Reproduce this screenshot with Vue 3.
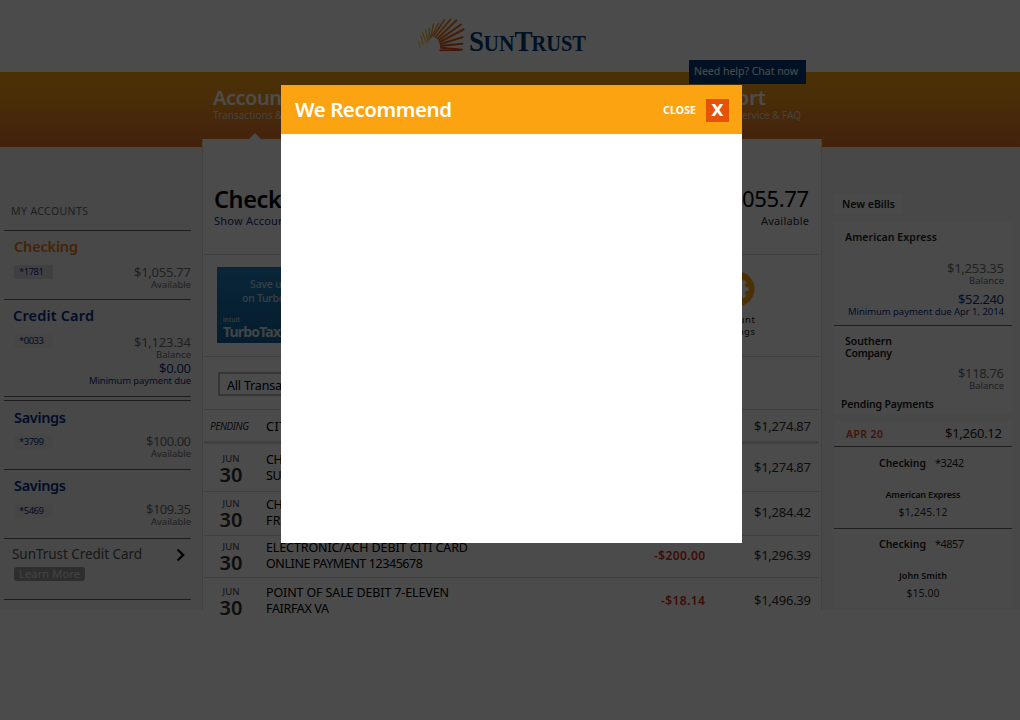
<script setup>
// v-fit="width" tracks a line of text so that it fills the given width.
const vFit = {
  mounted(el, { value }) {
    const natural = el.getBoundingClientRect().width
    const gaps = el.textContent.trim().length - 1
    if (!value || gaps < 1) return
    const spacing = (value - natural) / gaps
    el.style.letterSpacing = `${spacing}px`
    el.style.marginRight = `${-spacing}px`
  },
}

const accounts = [
  { name: 'Checking', nameW: 64, no: '*1781', amount: '$1,055.77', amountW: 57, note: 'Available', noteW: 40, kind: 'a1' },
  { name: 'Credit Card', nameW: 81, no: '*0033', amount: '$1,123.34', amountW: 57, note: 'Balance', noteW: 35, kind: 'a2', due: '$0.00' },
  { name: 'Savings', nameW: 52, no: '*3799', amount: '$100.00', amountW: 45, note: 'Available', noteW: 40, kind: 'a3' },
  { name: 'Savings', nameW: 52, no: '*5469', amount: '$109.35', amountW: 45, note: 'Available', noteW: 40, kind: 'a4' },
]

const rows = [
  { kind: 'r1', l1: 'CHECK', w1: 38, l2: 'SUNTRUST', w2: 61, bal: '$1,274.87' },
  { kind: 'r2', l1: 'CHECK', w1: 38, l2: 'FRESH', w2: 38, bal: '$1,284.42' },
  { kind: 'r3', l1: 'ELECTRONIC/ACH DEBIT CITI CARD', w1: 202, l2: 'ONLINE PAYMENT 12345678', w2: 157, neg: '-$200.00', negW: 51, bal: '$1,296.39' },
  { kind: 'r4', l1: 'POINT OF SALE DEBIT 7-ELEVEN', w1: 183, l2: 'FAIRFAX VA', w2: 63, neg: '-$18.14', negW: 44, bal: '$1,496.39' },
]

const payments = [
  { no: '*3242', who: 'American Express', whoW: 75, sum: '$1,245.12', sumW: 49 },
  { no: '*4857', who: 'John Smith', whoW: 48, sum: '$15.00', sumW: 33 },
]

const rays = [
  [440, 50.3, 460, 50.3, 1.5, '#d8471a'],
  [441, 47.8, 462, 49.6, 1.9, '#dc4f1c'],
  [441, 45.8, 462.5, 43.7, 2.1, '#e05a1e'],
  [440.5, 44, 462.5, 37.2, 2.2, '#e4661e'],
  [440, 42, 463.5, 29.5, 2.2, '#e36a22'],
  [439, 40, 461, 24.5, 2.1, '#e26a20'],
  [437.5, 38.5, 456.5, 20.2, 2, '#e87a22'],
  [435.5, 37, 450.5, 19.5, 1.8, '#e97e24'],
  [433.5, 36, 444.5, 20, 1.6, '#ea8a26'],
  [431.5, 36.5, 438.5, 23.5, 1.4, '#eb9428'],
  [430.5, 38, 433.5, 24, 1.3, '#eda028'],
  [429, 40, 429.2, 28, 1.2, '#efaa28'],
  [428, 42, 425.5, 29.5, 1.1, '#f0b428'],
  [426, 42.5, 422.5, 32.5, 1.1, '#f2c02a'],
  [423, 44.5, 421, 36, 1.1, '#f2c82a'],
  [420, 47.5, 418.6, 41, 1.1, '#f2cc2a'],
]
</script>

<template>
  <div class="page">
    <header class="brand">
      <svg class="logo" width="180" height="56" viewBox="412 7 180 56">
        <line v-for="(r, i) in rays" :key="i" :x1="r[0]" :y1="r[1]" :x2="r[2]" :y2="r[3]" :stroke-width="r[4]" :stroke="r[5]" stroke-linecap="round" />
        <g class="wordmark" fill="#003a7a">
          <text x="469" y="51" font-size="30" textLength="15" lengthAdjust="spacingAndGlyphs">S</text>
          <text x="483.5" y="51" font-size="23" textLength="31" lengthAdjust="spacingAndGlyphs">UN</text>
          <text x="514.5" y="51" font-size="30" textLength="18" lengthAdjust="spacingAndGlyphs">T</text>
          <text x="531.5" y="51" font-size="23" textLength="54.5" lengthAdjust="spacingAndGlyphs">RUST</text>
        </g>
      </svg>
    </header>

    <nav class="nav">
      <div class="tab">
        <b v-fit="86">Accounts</b>
        <small v-fit="106">Transactions &amp; Activity</small>
      </div>
      <div class="tab support">
        <b v-fit="78">Support</b>
        <small v-fit="113">Customer Service &amp; FAQ</small>
      </div>
      <i class="pointer"></i>
      <div class="chat"><span v-fit="104">Need help? Chat now</span></div>
    </nav>

    <div class="main">
      <aside class="left">
        <div class="heading"><span v-fit="77">MY ACCOUNTS</span></div>
        <section v-for="a in accounts" :key="a.no" class="account" :class="a.kind">
          <div class="name"><span v-fit="a.nameW">{{ a.name }}</span></div>
          <div class="detail">
            <div class="chip"><span v-fit="25">{{ a.no }}</span></div>
            <div class="money">
              <span v-fit="a.amountW" class="amt">{{ a.amount }}</span>
              <span v-fit="a.noteW" class="note">{{ a.note }}</span>
              <span v-if="a.due" v-fit="32" class="amt blue due">{{ a.due }}</span>
              <span v-if="a.due" v-fit="102" class="note blue">Minimum payment due</span>
            </div>
          </div>
        </section>
        <section class="offer">
          <div class="offer-text">
            <span v-fit="130" class="offer-name">SunTrust Credit Card</span>
            <div class="learn"><span v-fit="61">Learn More</span></div>
          </div>
          <svg class="chev" width="10" height="14" viewBox="0 0 10 14"><path d="M1.5 1.5 L7.2 7 L1.5 12.5" fill="none" stroke="#000" stroke-width="2.2" /></svg>
        </section>
      </aside>

      <main class="center">
        <section class="summary">
          <div class="col">
            <span v-fit="103" class="acct">Checking</span>
            <span v-fit="115" class="show">Show Account Details</span>
          </div>
          <div class="col end">
            <span v-fit="97" class="total">$1,055.77</span>
            <span v-fit="48" class="avail">Available</span>
          </div>
        </section>
        <section class="promo">
          <div class="turbo">
            <span v-fit="51" class="save">Save up to</span>
            <span v-fit="59" class="on">on TurboTax</span>
            <span v-fit="17" class="intuit">intuit</span>
            <span v-fit="58" class="tt">TurboTax</span>
          </div>
          <div class="settings">
            <svg width="36" height="36" viewBox="0 0 36 36">
              <circle cx="18" cy="18" r="17.5" fill="#f9a010" />
              <circle cx="18" cy="18" r="9" fill="#fff" />
              <circle cx="18" cy="18" r="9.5" fill="none" stroke="#fff" stroke-width="4" stroke-dasharray="4 3.46" stroke-dashoffset="2" />
            </svg>
            <span v-fit="40">Account</span>
            <span v-fit="40">Settings</span>
          </div>
        </section>
        <section class="filter">
          <div class="select"><span v-fit="89">All Transactions</span></div>
        </section>
        <section class="pending">
          <span v-fit="39" class="pend">PENDING</span>
          <span v-fit="25" class="desc">CITI</span>
          <span v-fit="57" class="bal">$1,274.87</span>
        </section>
        <section v-for="r in rows" :key="r.kind" class="tx" :class="r.kind">
          <div class="date"><span v-fit="17" class="jun">JUN</span><span v-fit="23" class="day">30</span></div>
          <div class="lines"><span v-fit="r.w1">{{ r.l1 }}</span><span v-fit="r.w2">{{ r.l2 }}</span></div>
          <div class="neg"><span v-if="r.neg" v-fit="r.negW">{{ r.neg }}</span></div>
          <div class="bal"><span v-fit="57">{{ r.bal }}</span></div>
        </section>
      </main>

      <aside class="right">
        <div class="tag"><span v-fit="53">New eBills</span></div>
        <div class="card bills">
          <section class="bill amex">
            <span v-fit="92" class="payee">American Express</span>
            <span v-fit="57" class="amt">$1,253.35</span>
            <span v-fit="35" class="note">Balance</span>
            <span v-fit="46" class="amt blue due2">$52.240</span>
            <span v-fit="156" class="note blue">Minimum payment due Apr 1, 2014</span>
          </section>
          <section class="bill southern">
            <span v-fit="47" class="payee">Southern</span>
            <span v-fit="47" class="payee">Company</span>
            <span v-fit="46" class="amt">$118.76</span>
            <span v-fit="35" class="note">Balance</span>
            <span v-fit="93" class="payee pp">Pending Payments</span>
          </section>
        </div>
        <div class="card pays">
          <div class="total-row"><b v-fit="37">APR 20</b><span v-fit="57">$1,260.12</span></div>
          <section v-for="p in payments" :key="p.no" class="pay">
            <div class="from"><b v-fit="47">Checking</b><span v-fit="29">{{ p.no }}</span></div>
            <div class="to">
              <span v-fit="p.whoW" class="who">{{ p.who }}</span>
              <span v-fit="p.sumW" class="sum">{{ p.sum }}</span>
            </div>
          </section>
        </div>
      </aside>
    </div>

    <div class="overlay"></div>
    <div class="modal">
      <div class="modal-head">
        <span v-fit="157" class="modal-title">We Recommend</span>
        <span v-fit="33" class="close">CLOSE</span>
        <span class="x">X</span>
      </div>
    </div>
  </div>
</template>

<style>
html, body { margin: 0; overflow: hidden; }
</style>

<style scoped>
.page {
  position: relative;
  width: 1020px;
  height: 720px;
  overflow: hidden;
  background: #fafafa;
  font-family: "Noto Sans", "Open Sans", sans-serif;
  color: #000;
}
.page span, .page b, .page small { display: block; white-space: nowrap; width: max-content; flex: none; }
.brand { height: 72px; display: flex; justify-content: center; box-sizing: border-box; padding: 7px 16px 0 0; background: #fcfcfc; }
.logo { overflow: visible; }
.wordmark { font-family: "Liberation Serif", serif; font-weight: 700; }

.nav {
  position: relative;
  height: 75px;
  display: flex;
  background: linear-gradient(#f8a018 0%, #f69a1a 35%, #e87c2a 75%, #e4762e 100%);
  color: #fff;
}
.tab { margin-left: 213px; padding-top: 15px; width: 180px; box-sizing: border-box; }
.support { margin-left: 295px; }
.tab b { font-size: 20px; line-height: 22px; font-weight: 600; color: #fff; }
.tab small { font-size: 10px; line-height: 12px; color: #f0dcc8; }
.pointer {
  position: absolute; left: 249px; bottom: 8px;
  border: 6px solid transparent; border-top: 0; border-bottom-color: #fafafa;
}
.chat {
  position: absolute; left: 689px; top: -12px; width: 117px; height: 24px;
  box-sizing: border-box; padding-left: 5px;
  background: #003a78; color: #fff; font-size: 10.5px; line-height: 22px;
}

.main { display: flex; height: 463px; background: #f0f0f0; }
.left { width: 202px; padding: 0 11px 0 4px; box-sizing: border-box; flex: none; }
.heading { height: 83px; box-sizing: border-box; padding: 57px 0 0 7px; font-size: 10.5px; line-height: 14px; color: #686868; }
.account { border-top: 1px solid #646464; box-sizing: border-box; }
.a1, .a3, .a4 { height: 69px; }
.a2 { border-bottom: 1px solid #646464; height: 98px; margin-bottom: 3px; }
.name { padding: 6px 0 0 10px; font-size: 14.5px; line-height: 18px; font-weight: 600; color: #0c2c84; height: 24px; box-sizing: border-box; }
.a2 .name { padding-left: 9px; }
.a1 .name { color: #ee7a10; }
.a3 .name { padding-top: 7px; }
.detail { display: flex; justify-content: space-between; }
.chip { width: 39px; height: 14px; margin: 10px 0 0 10px; padding-left: 5px; box-sizing: border-box; background: #e9e9ec; color: #0c2c84; font-size: 9.5px; line-height: 13px; }
.a1 .chip { background: #d6d8df; }
.money { display: flex; flex-direction: column; align-items: flex-end; padding-top: 10px; }
.a2 .money { padding-top: 11px; }
.a3 .money { padding-top: 9px; }
.a4 .money { padding-top: 8px; }
.amt { font-size: 13px; line-height: 14px; color: #6e6e6e; }
.note { font-size: 9.5px; line-height: 11px; color: #6e6e6e; }
.due { margin-top: 1px; }
.page .blue { color: #142e80; }
.offer { height: 62px; box-sizing: border-box; border: solid #646464; border-width: 1px 0; display: flex; justify-content: space-between; padding: 6px 5px 0 8px; }
.offer-name { font-size: 13.5px; line-height: 18px; color: #505050; }
.learn { margin: 4px 0 0 2px; width: 71px; height: 14px; padding-left: 5px; box-sizing: border-box; border-radius: 3px; background: #9a9a9a; color: #e0e0e0; font-size: 11px; line-height: 14px; }
.chev { margin-top: 3px; }

.center { width: 620px; height: 471px; margin-top: -8px; box-sizing: border-box; flex: none; background: #fafafa; border: solid #dadada; border-width: 0 1px; padding: 0 2px 0 1px; position: relative; z-index: 0; }
.center section { border-bottom: 1px solid #d6d6d6; box-sizing: border-box; display: flex; }
.summary { height: 116px; justify-content: space-between; padding: 46px 10px 0 10px; }
.end { display: flex; flex-direction: column; align-items: flex-end; }
.acct { font-size: 23.5px; line-height: 28px; font-weight: 600; }
.show { font-size: 11px; line-height: 15px; color: #142e80; }
.total { font-size: 22px; line-height: 27px; margin-bottom: 1px; }
.avail { font-size: 11px; line-height: 15px; color: #303030; }
.promo { height: 102px; justify-content: space-between; padding: 12px 64px 0 13px; }
.turbo { width: 170px; height: 76px; background: linear-gradient(#1f80bc, #10609a); color: #b8d8e6; font-size: 10.5px; line-height: 14px; font-weight: 500; padding-top: 10px; box-sizing: border-box; }
.save { margin-left: 33px; }
.on { margin-left: 25px; }
.page .intuit { margin-left: 6px; margin-top: 10px; font-size: 6.5px; line-height: 9px; }
.page .tt { margin-left: 6px; font-size: 14px; line-height: 16px; font-weight: 700; color: #d4e4ec; }
.settings { display: flex; flex-direction: column; align-items: flex-end; padding-top: 4px; font-size: 9.5px; line-height: 12px; color: #202020; }
.settings svg { margin-bottom: 7px; }
.filter { height: 53px; padding: 15px 0 0 14px; }
.select { width: 180px; height: 24px; box-sizing: border-box; border: 2px solid #b4b4b4; padding-left: 7px; font-size: 12.5px; line-height: 23px; }
.center .pending { height: 34px; border-bottom: 3px solid #d6d6d6; align-items: center; padding: 1px 8px 0 6px; }
.pend { font-size: 10px; font-style: italic; color: #303030; line-height: 14px; }
.page .pending .desc { margin-left: 17px; font-size: 12.5px; }
.page .pending .bal { margin-left: auto; }
.page .bal { font-size: 13px; line-height: 16px; color: #303030; }
.tx { align-items: flex-start; padding: 8px 8px 0 6px; }
.center .r1 { height: 48px; }
.center .r2 { height: 44px; padding-top: 5px; }
.center .r3 { height: 42px; padding-top: 4px; }
.center .r4 { border: 0; padding-top: 7px; height: 60px; }
.date { width: 42px; display: flex; flex-direction: column; align-items: center; color: #404040; }
.jun { font-size: 9.5px; line-height: 13px; }
.day { font-size: 20px; line-height: 20px; font-weight: 600; color: #303030; }
.lines { margin-left: 14px; width: 290px; font-size: 12.5px; line-height: 16px; }
.neg { flex: 1; padding-top: 8px; font-size: 12px; line-height: 16px; font-weight: 600; color: #cc2d14; display: flex; justify-content: flex-end; padding-right: 49px; }
.tx .bal { padding-top: 7px; }

.right { flex: 1; padding: 47px 8px 0 12px; }
.tag { width: 68px; height: 20px; background: #f8f8f8; font-size: 10.5px; line-height: 20px; font-weight: 600; padding-left: 8px; box-sizing: border-box; color: #202020; }
.card { background: #f8f8f8; width: 178px; }
.bills { margin-top: 8px; height: 192px; }
.bill { display: flex; flex-direction: column; align-items: flex-end; padding: 0 8px 0 11px; box-sizing: border-box; }
.payee { align-self: flex-start; font-size: 10.5px; line-height: 12px; font-weight: 600; color: #202020; }
.amex { height: 104px; padding-top: 9px; border-bottom: 1px solid #646464; }
.amex .payee { margin-bottom: 18px; }
.due2 { margin-top: 6px; }
.southern { padding-top: 9px; }
.southern .amt { margin-top: 7px; }
.southern .pp { margin: 7px 0 0 -4px; }
.pays { margin-top: 7px; height: 187px; }
.total-row { height: 26px; box-sizing: border-box; border-bottom: 1px solid #646464; display: flex; justify-content: space-between; padding: 4px 10px 0 12px; font-size: 13px; line-height: 16px; color: #202020; }
.total-row b { font-size: 10.5px; font-weight: 600; color: #d84a1c; line-height: 19px; }
.pay { height: 82px; box-sizing: border-box; border-bottom: 1px solid #646464; padding-top: 8px; color: #202020; }
.pay:last-child { border: 0; padding-top: 7px; }
.from { display: flex; margin-left: 45px; font-size: 11px; line-height: 16px; gap: 9px; }
.from b { font-size: 10.5px; font-weight: 600; }
.to { display: flex; flex-direction: column; align-items: center; margin: 17px 0 0 0; }
.who { font-size: 9px; line-height: 14px; font-weight: 600; }
.sum { font-size: 10.5px; line-height: 14px; margin-top: 3px; color: #303030; }

.overlay { position: absolute; inset: 0; background: rgba(0, 0, 0, 0.7); }
.modal { position: absolute; left: 281px; top: 85px; width: 461px; height: 458px; background: #fff; }
.modal-head { height: 49px; background: #fca311; color: #fff; display: flex; align-items: center; padding: 0 13px 0 14px; box-sizing: border-box; }
.modal-title { font-size: 20.5px; line-height: 28px; font-weight: 600; margin-top: -1px; }
.page .close { margin-left: auto; font-size: 10.5px; line-height: 14px; font-weight: 700; padding-top: 1px; }
.page .x { width: 23px; height: 23px; margin: 2px 0 0 10px; background: #e65304; text-align: center; font-family: "DejaVu Sans", sans-serif; font-size: 16px; line-height: 23px; font-weight: 700; }
</style>
